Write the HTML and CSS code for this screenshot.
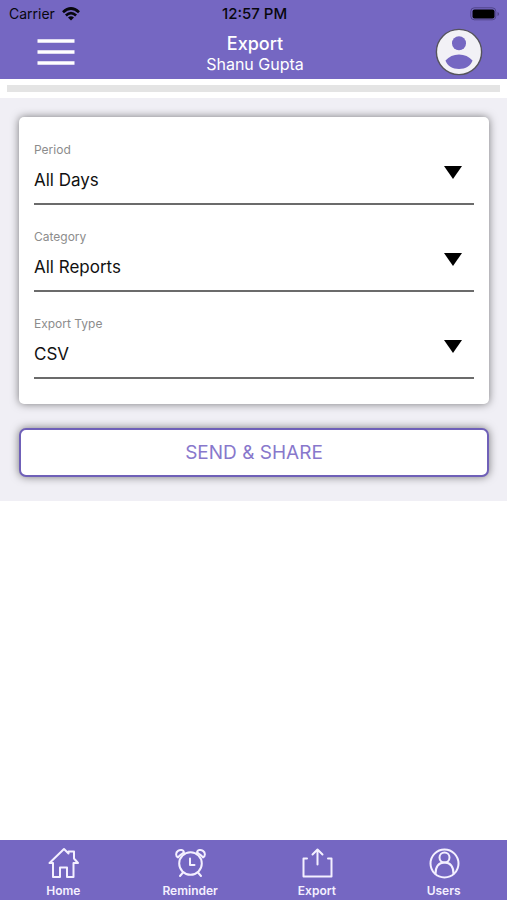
FILE: index.html
```html
<!DOCTYPE html>
<html lang="en">
<head>
<meta charset="utf-8">
<meta name="viewport" content="width=device-width, initial-scale=1">
<title>Export</title>
<link rel="stylesheet" href="styles.css">
</head>
<body>
<header class="header">
  <div class="status">
    <span class="carrier">Carrier
      <svg width="18" height="14" viewBox="0 0 18 14" aria-hidden="true"><g fill="none" stroke="#08070d" stroke-width="2.7"><path d="M1 5.2Q9-2.2 17 5.2"/><path d="M3.9 8.5Q9 3.8 14.1 8.5"/></g><path d="M6 10.6Q9 8 12 10.6L9 13.6Z" fill="#08070d"/></svg>
    </span>
    <span class="clock">12:57 PM</span>
    <svg class="battery" width="30" height="14" viewBox="0 0 30 14" aria-hidden="true"><rect x=".8" y=".8" width="25" height="12" rx="3.5" fill="none" stroke="#50458a"/><rect x="2.5" y="2.5" width="22" height="9" rx="2" fill="#000"/><path d="M27.5 5v4q1.6-.5 1.6-2t-1.6-2" fill="#50458a"/></svg>
  </div>
  <div class="titlebar">
    <button class="icon-button menu" aria-label="Menu"><svg width="38" height="28" viewBox="0 0 38 28"><path d="M.5 3h37M.5 14h37M.5 25h37" stroke="#fff" stroke-width="3.6"/></svg></button>
    <div class="titles"><h1>Export</h1><p>Shanu Gupta</p></div>
    <button class="icon-button profile" aria-label="Profile"><svg width="48" height="48" viewBox="0 0 48 48"><circle cx="24" cy="24" r="22.6" fill="#f2f1f6" stroke="#55535c" stroke-width="1.4"/><circle cx="24" cy="15.300" r="7" fill="#7567c2"/><path d="M10.500 32.500C14 28.500 18.500 26.500 24 26.500s10 2 13.500 6C36 37.500 30.500 41 24 41S12 37.500 10.500 32.500Z" fill="#7567c2"/></svg></button>
  </div>
</header>
<div class="progress"><div class="track"></div></div>
<main class="content">
  <form class="form">
    <div class="card">
      <div class="field">
        <label for="period">Period</label>
        <select id="period"><option>All Days</option></select>
        <svg class="arrow" width="18" height="13" viewBox="0 0 18 13" aria-hidden="true"><path d="M0 0h18L9 13Z"/></svg>
      </div>
      <div class="field">
        <label for="category">Category</label>
        <select id="category"><option>All Reports</option></select>
        <svg class="arrow" width="18" height="13" viewBox="0 0 18 13" aria-hidden="true"><path d="M0 0h18L9 13Z"/></svg>
      </div>
      <div class="field">
        <label for="type">Export Type</label>
        <select id="type"><option>CSV</option></select>
        <svg class="arrow" width="18" height="13" viewBox="0 0 18 13" aria-hidden="true"><path d="M0 0h18L9 13Z"/></svg>
      </div>
    </div>
    <button class="send" type="button">SEND &amp; SHARE</button>
  </form>
</main>
<nav class="tabs">
  <a href="#home"><svg width="32" height="32" viewBox="0 0 32 32"><path d="M6 16v14h7v-9.500h7V30h6.500V16H31l-4-4.500V4.500h-5.500V6.500L20 5 17 2 2.500 16Z"/></svg>Home</a>
  <a href="#reminder"><svg width="32" height="32" viewBox="0 0 32 32"><circle cx="16.500" cy="16.500" r="11.300"/><path d="M16 11.500v6.500h4.500M9 25.500l-3 3.500M24 25.500l3 3.500"/><path d="M4 10.500C1.500 9 1.500 5.500 4 3.800S9.500 3 10 5.200Q8.500 6.500 7 7.500T4 10.500ZM29 10.500c2.500-1.500 2.500-5 0-6.700s-5.500-.8-6 1.400Q24.500 6.500 26 7.500t3 3Z"/></svg>Reminder</a>
  <a href="#export"><svg width="32" height="32" viewBox="0 0 32 32"><path d="M6 11.500H2.500V29.500h28V11.500H27M16.500 17.500V2.500M11.500 7.500l5-5 5 5"/></svg>Export</a>
  <a href="#users"><svg width="32" height="32" viewBox="0 0 32 32"><circle cx="16.500" cy="16.500" r="14"/><circle cx="16.500" cy="10.500" r="5"/><path d="M7.500 27C7.500 19.500 11 15.500 16.500 15.500s9 4 9 11.500"/></svg>Users</a>
</nav>
</body>
</html>
```

FILE: styles.css
```css
* {
  box-sizing: border-box;
}

body {
  margin: 0;
  min-height: 100vh;
  display: flex;
  flex-direction: column;
  background: #fff;
  font-family: Inter, "Liberation Sans", sans-serif;
}

button,
select {
  font-family: inherit;
}

.header {
  background: #7567c2;
}

.status {
  display: grid;
  grid-template-columns: 1fr auto 1fr;
  align-items: center;
  height: 27px;
  padding: 0 7px 0 9px;
  color: #08070d;
  font-size: 14px;
}

.carrier {
  display: flex;
  align-items: center;
  gap: 7px;
}

.clock {
  font-size: 15px;
  font-weight: 500;
}

.battery {
  justify-self: end;
}

.titlebar {
  display: flex;
  align-items: center;
  justify-content: space-between;
  height: 52px;
  padding: 0 24px 2px 37px;
  color: #fff;
}

.icon-button {
  display: flex;
  padding: 0;
  border: 0;
  background: none;
}

.titles {
  padding-top: 4px;
  text-align: center;
}

.titles h1 {
  margin: 0;
  font-size: 18px;
  line-height: 20px;
  font-weight: 500;
}

.titles p {
  margin: 0;
  font-size: 16px;
  line-height: 20px;
}

.progress {
  padding: 6px 7px;
}

.track {
  height: 7px;
  background: #e4e4e4;
}

.content {
  padding: 19px 18px 24px 19px;
  background: #f0eff5;
}

.form {
  display: grid;
  gap: 24px;
}

.card {
  padding: 1px 15px 25px;
  border-radius: 5px;
  background: #fff;
  box-shadow: 0 0 8px rgba(0, 0, 0, 0.5);
}

.field {
  position: relative;
  padding-top: 24px;
  border-bottom: 2px solid #6b6b6b;
}

.field label {
  display: block;
  color: #8c8c8c;
  font-size: 12px;
  line-height: 16px;
}

.field select {
  display: block;
  width: 100%;
  height: 45px;
  padding: 0 0 2px;
  border: 0;
  appearance: none;
  background: none;
  color: #111;
  font-size: 17px;
}

.arrow {
  position: absolute;
  right: 12px;
  bottom: 24px;
  pointer-events: none;
}

.send {
  height: 49px;
  border: 2px solid #6f60b8;
  border-radius: 7px;
  background: #fff;
  color: #8878cc;
  font-size: 19px;
  box-shadow: 0 0 8px rgba(0, 0, 0, 0.5);
}

.tabs {
  display: grid;
  grid-template-columns: repeat(4, 1fr);
  height: 60px;
  margin-top: auto;
  background: #7567c2;
}

.tabs a {
  display: flex;
  flex-direction: column;
  align-items: center;
  padding-top: 7px;
  gap: 4px;
  color: #f4f0ff;
  font-size: 12px;
  line-height: 16px;
  font-weight: 600;
  text-decoration: none;
}

.tabs svg {
  fill: none;
  stroke: #f4f0ff;
  stroke-width: 2;
  stroke-linecap: round;
  stroke-linejoin: round;
}
```
